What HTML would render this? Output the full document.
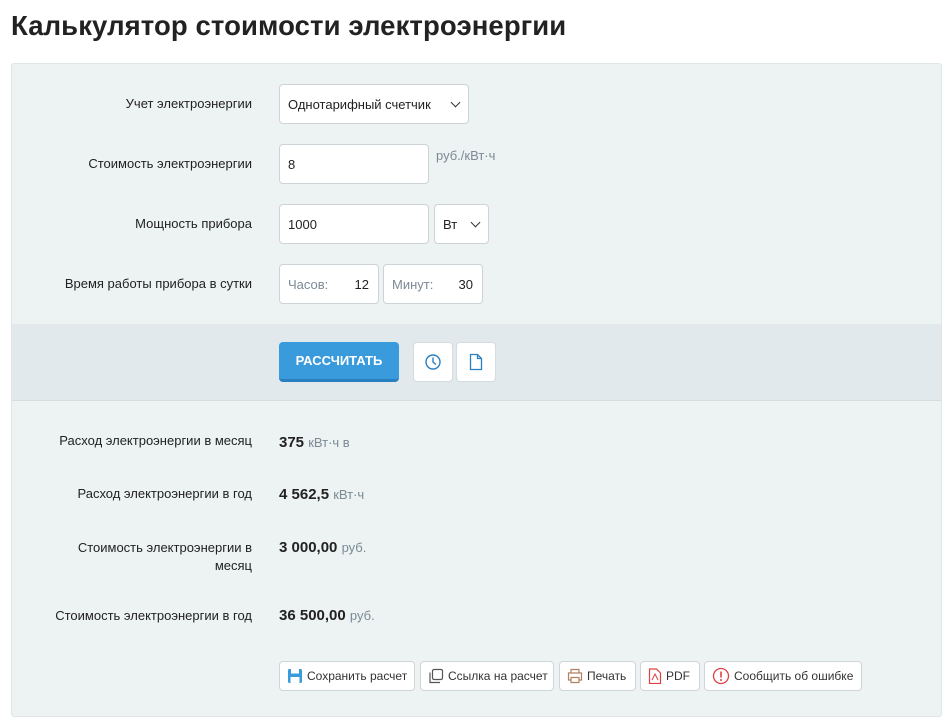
<!DOCTYPE html>
<html><head><meta charset="utf-8"><style>
*{box-sizing:border-box;margin:0;padding:0}
body{width:952px;height:728px;background:#fff;font-family:"Liberation Sans","DejaVu Sans",sans-serif;color:#222;position:relative;overflow:hidden}
.a{position:absolute}
h1{position:absolute;left:11px;top:10px;font-size:27.5px;font-weight:bold;color:#222;letter-spacing:0.1px}
.panel{left:11px;top:63px;width:931px;height:654px;background:#edf2f2;border:1px solid #dfe6e8;border-radius:3px}
.band{left:12px;top:324px;width:929px;height:77px;background:#e2e9ec;border-bottom:1px solid #d5dde0}
.lbl{font-size:13px;color:#222;text-align:right;width:240px;left:12px}
.box{background:#fff;border:1px solid #ccd3d6;border-radius:4px;font-size:13px;color:#222;display:flex;align-items:center;padding-left:8px}
.unit{font-size:13px;color:#7b8a96}
.val{font-size:15px;font-weight:bold;color:#222;left:279px}
.val span{font-size:13px;font-weight:normal;color:#7b8a96}
.btn{background:#fff;border:1px solid #cfd6d9;border-radius:4px;font-size:12px;color:#333;display:flex;align-items:center;top:661px;height:30px;padding-left:7px;gap:4px;white-space:nowrap;overflow:hidden}
.chev{position:absolute;right:9px;top:14px;width:7px;height:7px;border-right:1.5px solid #333;border-bottom:1.5px solid #333;transform:rotate(45deg)}
</style></head><body>
<h1>Калькулятор стоимости электроэнергии</h1>
<div class="a panel"></div>
<div class="a band"></div>

<div class="a lbl" style="top:96px">Учет электроэнергии</div>
<div class="a box" style="left:279px;top:84px;width:190px;height:40px">Однотарифный счетчик<div class="chev"></div></div>

<div class="a lbl" style="top:156px">Стоимость электроэнергии</div>
<div class="a box" style="left:279px;top:144px;width:150px;height:40px">8</div>
<div class="a unit" style="left:436px;top:148px">руб./кВт·ч</div>

<div class="a lbl" style="top:216px">Мощность прибора</div>
<div class="a box" style="left:279px;top:204px;width:150px;height:40px">1000</div>
<div class="a box" style="left:434px;top:204px;width:55px;height:40px">Вт<div class="chev"></div></div>

<div class="a lbl" style="top:276px">Время работы прибора в сутки</div>
<div class="a box" style="left:279px;top:264px;width:100px;height:40px;justify-content:space-between;padding-right:9px"><span style="color:#7b8a96">Часов:</span><span>12</span></div>
<div class="a box" style="left:383px;top:264px;width:100px;height:40px;justify-content:space-between;padding-right:9px"><span style="color:#7b8a96">Минут:</span><span>30</span></div>

<div class="a" style="left:279px;top:342px;width:120px;height:40px;background:#3a9bdc;border-radius:4px;border-bottom:3px solid #2a7fbf;color:#fff;font-weight:bold;font-size:13px;display:flex;align-items:center;justify-content:center">РАССЧИТАТЬ</div>
<div class="a" style="left:413px;top:342px;width:40px;height:40px;background:#fff;border:1px solid #d5dcdf;border-radius:4px;display:flex;align-items:center;justify-content:center"><svg width="18" height="18" viewBox="0 0 18 18"><circle cx="9" cy="9" r="7" fill="none" stroke="#2a7fbf" stroke-width="1.4"/><path d="M9 4.5V9l3 2.5" fill="none" stroke="#2a7fbf" stroke-width="1.4"/></svg></div>
<div class="a" style="left:456px;top:342px;width:40px;height:40px;background:#fff;border:1px solid #d5dcdf;border-radius:4px;display:flex;align-items:center;justify-content:center"><svg width="14" height="18" viewBox="0 0 14 18"><path d="M1.5 1.5h7l4 4v11h-11z M8.5 1.5v4h4" fill="none" stroke="#2a7fbf" stroke-width="1.3"/></svg></div>

<div class="a lbl" style="top:433px">Расход электроэнергии в месяц</div>
<div class="a val" style="top:434px">375 <span>кВт·ч в</span></div>
<div class="a lbl" style="top:486px">Расход электроэнергии в год</div>
<div class="a val" style="top:486px">4 562,5 <span>кВт·ч</span></div>
<div class="a lbl" style="top:539px;line-height:18px">Стоимость электроэнергии в<br>месяц</div>
<div class="a val" style="top:539px">3 000,00 <span>руб.</span></div>
<div class="a lbl" style="top:608px">Стоимость электроэнергии в год</div>
<div class="a val" style="top:607px">36 500,00 <span>руб.</span></div>

<div class="a btn" style="left:279px;width:136px"><svg width="16" height="16" viewBox="0 0 16 16"><rect x="1" y="1" width="14" height="14" rx="1.5" fill="#3a9bdc"/><rect x="4" y="1" width="8" height="4.5" fill="#fff"/><rect x="3.5" y="9" width="9" height="6" fill="#fff"/></svg>Сохранить расчет</div>
<div class="a btn" style="left:420px;width:134px"><svg width="16" height="16" viewBox="0 0 16 16"><rect x="4.5" y="1.5" width="10" height="10" rx="1.5" fill="none" stroke="#555" stroke-width="1.2"/><path d="M2 4.5v10h10" fill="none" stroke="#555" stroke-width="1.2"/></svg>Ссылка на расчет</div>
<div class="a btn" style="left:559px;width:77px"><svg width="16" height="16" viewBox="0 0 16 16"><path d="M4 5V1.5h8V5M4 12H1.5V5h13v7H12M4 9.5h8v5H4z" fill="none" stroke="#b08060" stroke-width="1.2"/></svg>Печать</div>
<div class="a btn" style="left:640px;width:60px"><svg width="14" height="16" viewBox="0 0 14 16"><path d="M1.5 1h7l4 4v10.5h-11z" fill="none" stroke="#e04040" stroke-width="1.2"/><path d="M4 12l3-6 3 6" fill="none" stroke="#e04040" stroke-width="1"/></svg>PDF</div>
<div class="a btn" style="left:704px;width:158px"><svg width="18" height="18" viewBox="0 0 18 18"><circle cx="9" cy="9" r="7.5" fill="none" stroke="#e04040" stroke-width="1.3"/><path d="M9 4.5v6" stroke="#e04040" stroke-width="1.6"/><circle cx="9" cy="13" r="1" fill="#e04040"/></svg>Сообщить об ошибке</div>
</body></html>
